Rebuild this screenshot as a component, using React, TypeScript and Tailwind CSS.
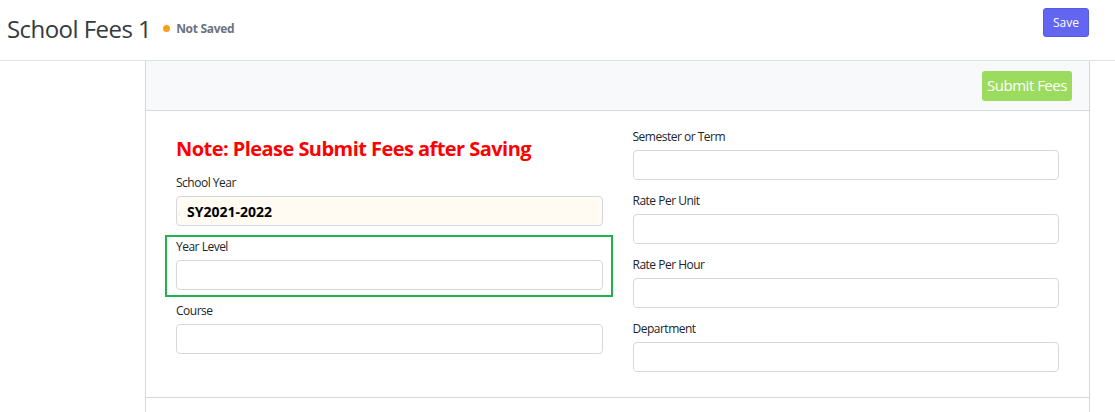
const Field = ({ label, value, cream }: { label: string; value?: string; cream?: boolean }) => {
  return (
    <div>
      <label className="block pt-[1px] text-[12px] leading-[18px] tracking-[-0.5px] text-[#212529]">{label}</label>
      <div
        className={`mt-[4px] flex h-[30px] items-center rounded-[4px] border border-[#d4d8dd] px-[10px] text-[14px] font-bold text-black ${
          cream ? "bg-[#fffbf2]" : "bg-white"
        }`}
      >
        {value}
      </div>
    </div>
  );
};

const App = () => {
  return (
    <div className="min-h-[412px] bg-white font-['Segoe_UI','Open_Sans',sans-serif]">
      <div className="flex h-[61px] justify-between border-b border-[#dfe3e8] pl-[7px] pr-[26px]">
        <div className="flex items-center gap-[6px] pb-[3px]">
          <h1 className="text-[24px] leading-none tracking-[-0.55px] text-[#343a40]">School Fees 1</h1>
          <span className="ml-[6px] h-[7px] w-[7px] rounded-full bg-[#f7a01b]" />
          <span className="text-[12px] font-bold tracking-[-0.3px] text-[#6b7280]">Not Saved</span>
        </div>
        <button className="mt-[8px] h-[29px] w-[46px] rounded-[3px] border border-[#5658e8] bg-[#6366f1] text-[12px] text-white">
          Save
        </button>
      </div>

      <div className="flex">
        <div className="w-[145px] shrink-0" />
        <div className="w-[945px] border-x border-[#d4d8dd]">
          <div className="flex h-[50px] items-center justify-end border-b border-[#d4d8dd] bg-[#f8f9fb] pr-[17px]">
            <button className="h-[30px] w-[90px] rounded-[3px] bg-[#9bdc5f] text-[15px] tracking-[-0.5px] text-white">
              Submit Fees
            </button>
          </div>

          <div className="grid grid-cols-2 gap-x-[30px] border-b border-[#d4d8dd] px-[30px] pb-[25px] pt-[16px]">
            <div className="flex flex-col gap-[11px]">
              <div className="pt-[9px] text-[20px] font-bold leading-[26px] tracking-[-0.55px] text-[#ff0000]">
                Note: Please Submit Fees after Saving
              </div>
              <Field label="School Year" value="SY2021-2022" cream />
              <div className="relative">
                <div className="pointer-events-none absolute -bottom-[7px] -left-[11px] -right-[10px] -top-[2px] border-2 border-[#22b14c]" />
                <Field label="Year Level" />
              </div>
              <Field label="Course" />
            </div>
            <div className="flex flex-col gap-[11px]">
              <Field label="Semester or Term" />
              <Field label="Rate Per Unit" />
              <Field label="Rate Per Hour" />
              <Field label="Department" />
            </div>
          </div>
          <div className="h-[20px]" />
        </div>
      </div>
    </div>
  );
};

export default App;
